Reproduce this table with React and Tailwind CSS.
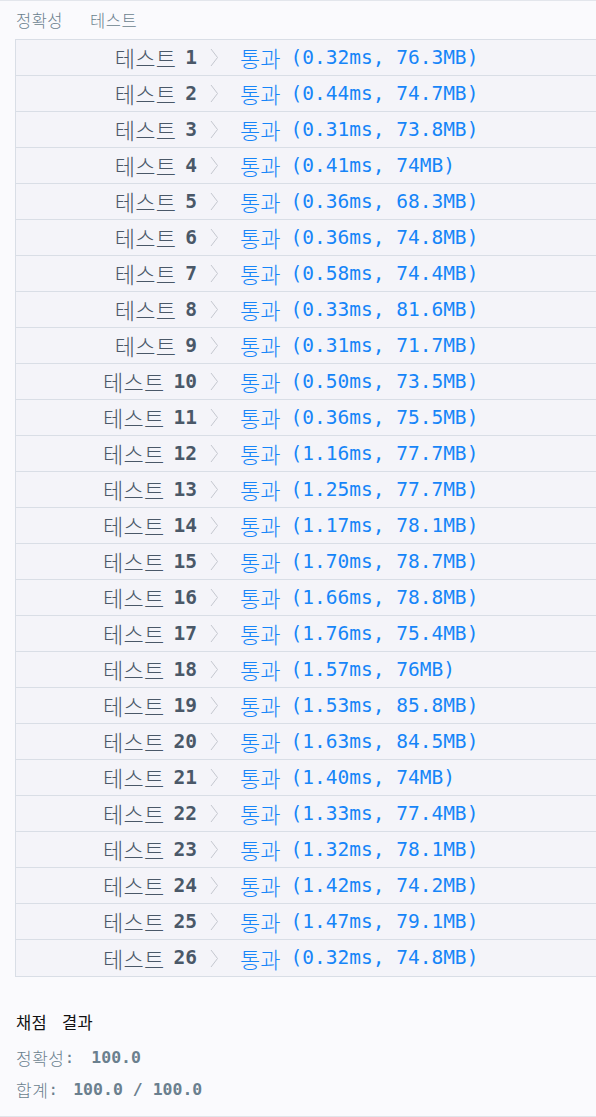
import React from 'react';

const results = [
  ['0.32ms', '76.3MB'], ['0.44ms', '74.7MB'], ['0.31ms', '73.8MB'], ['0.41ms', '74MB'],
  ['0.36ms', '68.3MB'], ['0.36ms', '74.8MB'], ['0.58ms', '74.4MB'], ['0.33ms', '81.6MB'],
  ['0.31ms', '71.7MB'], ['0.50ms', '73.5MB'], ['0.36ms', '75.5MB'], ['1.16ms', '77.7MB'],
  ['1.25ms', '77.7MB'], ['1.17ms', '78.1MB'], ['1.70ms', '78.7MB'], ['1.66ms', '78.8MB'],
  ['1.76ms', '75.4MB'], ['1.57ms', '76MB'], ['1.53ms', '85.8MB'], ['1.63ms', '84.5MB'],
  ['1.40ms', '74MB'], ['1.33ms', '77.4MB'], ['1.32ms', '78.1MB'], ['1.42ms', '74.2MB'],
  ['1.47ms', '79.1MB'], ['0.32ms', '74.8MB'],
];

const mono = { fontFamily: '"DejaVu Sans Mono", "Noto Sans CJK KR", monospace' };

// hangul in the shot is drawn thin and a bit larger than the latin part
const Ko = ({ children, className = '' }) => (
  <span
    className={`font-light ${className}`}
    style={{ fontFamily: '"Noto Sans CJK KR", sans-serif' }}
  >
    {children}
  </span>
);

const Chevron = () => (
  <svg width="9" height="19" viewBox="0 0 9 19" className="shrink-0">
    <polyline points="1,1 7.5,9.5 1,18" fill="none" stroke="#c4c7cf" strokeWidth="1" />
  </svg>
);

export default function App() {
  return (
    <div
      className="min-h-[1117px] w-[596px] overflow-hidden bg-[#fafafd] border-t border-[#e3e6ec] pt-px"
      style={mono}
    >
      {/* section title */}
      <div className="h-[37px] flex items-center pl-[16px] text-[#6a7f8e]">
        <Ko className="text-[16.5px] tracking-[0.5px]">정확성</Ko>
        <Ko className="text-[16.5px] tracking-[0.5px] ml-[27px]">테스트</Ko>
      </div>

      {/* test table */}
      <div className="ml-[15px] w-[620px] border border-[#d9dee6] bg-[#f4f4f9]">
        {results.map(([ms, mb], i) => (
          <div
            key={i}
            className={`flex items-center h-[36px] ${i < results.length - 1 ? 'border-b border-[#d9dee6]' : ''}`}
          >
            <div className="w-[181px] flex items-center justify-end text-[#4a5868] whitespace-pre">
              <Ko className="text-[22px] tracking-[0.3px]">테스트</Ko>
              <span className="ml-[9px] text-[19.5px] font-semibold">{i + 1}</span>
            </div>
            <div className="w-[43px] flex pl-[13px]">
              <Chevron />
            </div>
            <div className="flex items-center text-[#1685f8] whitespace-pre">
              <Ko className="text-[22px]">통과</Ko>
              <span className="ml-[10px] text-[19.5px]">({ms}, {mb})</span>
            </div>
          </div>
        ))}
      </div>

      {/* summary */}
      <div className="pl-[16px] pt-[31px] pb-[14px]">
        <div className="text-[#111] h-[28px] flex items-center">
          <Ko className="font-normal text-[16.5px] tracking-[0.3px]">채점</Ko>
          <Ko className="font-normal text-[16.5px] tracking-[0.3px] ml-[15px]">결과</Ko>
        </div>
        <div className="mt-[10px] text-[#6a7f8e] h-[24px] flex items-center whitespace-pre">
          <Ko className="text-[17px] tracking-[0.5px]">정확성</Ko>
          <span className="text-[16.5px]">: </span>
          <span className="text-[16.5px] font-semibold ml-[7px]">100.0</span>
        </div>
        <div className="mt-[8px] text-[#6a7f8e] h-[24px] flex items-center whitespace-pre">
          <Ko className="text-[17px] tracking-[0.5px]">합계</Ko>
          <span className="text-[16.5px]">: </span>
          <span className="text-[16.5px] font-semibold ml-[5px]">100.0 / 100.0</span>
        </div>
      </div>
      <div className="border-t-2 border-[#e1e4e9]" />
    </div>
  );
}
